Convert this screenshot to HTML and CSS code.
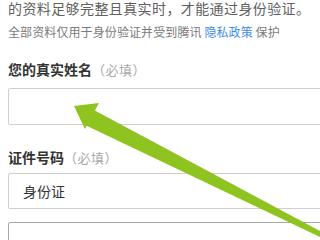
FILE: index.html
```html
<!DOCTYPE html>
<html lang="zh-CN">
<head>
<meta charset="utf-8">
<link rel="stylesheet" href="styles.css">
</head>
<body>
<div class="page">
  <p class="intro">的资料足够完整且真实时，才能通过身份验证。</p>
  <p class="note">全部资料仅用于身份验证并受到腾讯 <a class="link">隐私政策</a> 保护</p>
  <div class="label label-name">您的真实姓名<span class="req">（必填）</span></div>
  <div class="field field-name"></div>
  <div class="label label-id">证件号码<span class="req">（必填）</span></div>
  <div class="field field-type">身份证</div>
  <div class="field field-number"></div>
</div>
<svg class="arrow" width="320" height="240" viewBox="0 0 320 240">
  <polygon class="arrow-shaft" points="92,109 320,231 320,237 85,125"/>
  <polygon class="arrow-head" points="74,106 99,103 85,129"/>
</svg>
</body>
</html>
```
FILE: styles.css
```css
html, body {
  margin: 0;
  padding: 0;
  width: 320px;
  height: 240px;
  overflow: hidden;
  background: #fff;
  font-family: "Noto Sans CJK SC", "Liberation Sans", sans-serif;
}
.page {
  position: relative;
  padding-left: 8px;
}
.intro {
  margin: 0;
  font-size: 14px;
  line-height: 16px;
  letter-spacing: 0.4px;
  color: #616161;
  white-space: nowrap;
}
.note {
  margin: 8px 0 0;
  font-size: 12px;
  line-height: 15px;
  letter-spacing: 0.1px;
  color: #7a7a7a;
  white-space: nowrap;
}
.link {
  color: #3f8de8;
}
.label {
  font-size: 14px;
  line-height: 20px;
  font-weight: bold;
  color: #333;
  white-space: nowrap;
}
.label-name {
  margin-top: 20px;
}
.label-id {
  margin-top: 22px;
}
.req {
  font-weight: normal;
  font-size: 13px;
  letter-spacing: 0.5px;
  color: #a8a8a8;
}
.field {
  box-sizing: border-box;
  height: 37px;
  margin-right: -20px;
  border: 1px solid #cfcfcf;
  border-radius: 2px;
  font-size: 14px;
  line-height: 34px;
  color: #333;
  padding-left: 14px;
}
.field-name {
  margin-top: 8px;
}
.field-type {
  margin-top: 5px;
  height: 36px;
}
.field-number {
  margin-top: 13px;
  border-color: #a5a8ad;
}
.arrow {
  position: absolute;
  left: 0;
  top: 0;
}
.arrow-shaft, .arrow-head {
  fill: #8fc31f;
}
```
